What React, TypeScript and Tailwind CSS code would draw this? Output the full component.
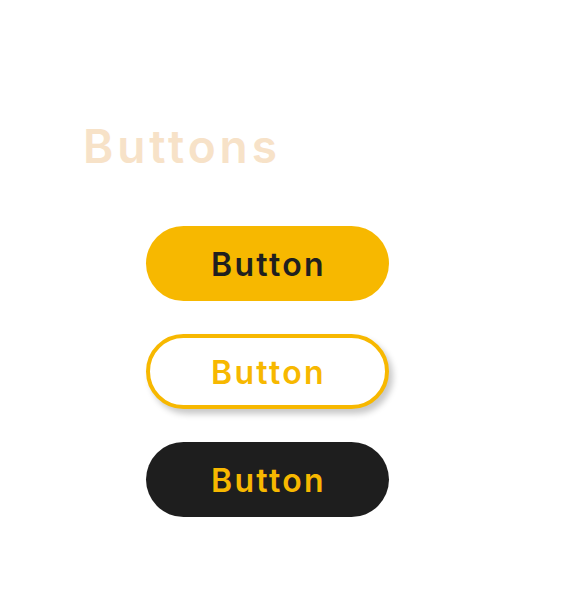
export default function App() {
  return (
    <div className="w-[588px] h-[606px] bg-white" style={{ fontFamily: "Inter, 'Noto Sans', sans-serif" }}>
      <div className="pt-[116px] pl-[83px]">
        <h1 className="text-[46px] leading-[60px] font-semibold text-[#F7E2C8] tracking-[3.9px]">Buttons</h1>
      </div>
      <div className="pl-[146px] pt-[50px] flex flex-col gap-[33px]">
        <button className="w-[243px] h-[75px] rounded-full bg-[#F7B800] text-[#1f1f1f] text-[32px] font-semibold tracking-[2.3px] pl-[2px] pt-[2px]">Button</button>
        <button className="w-[243px] h-[75px] rounded-full bg-white border-4 border-[#F7B800] text-[#F7B800] text-[32px] font-semibold tracking-[2.3px] pl-[2px] pt-[2px] shadow-[4px_5px_6px_rgba(0,0,0,0.22)]">Button</button>
        <button className="w-[243px] h-[75px] rounded-full bg-[#1E1E1E] text-[#F7B800] text-[32px] font-semibold tracking-[2.3px] pl-[2px] pt-[2px]">Button</button>
      </div>
    </div>
  );
}
